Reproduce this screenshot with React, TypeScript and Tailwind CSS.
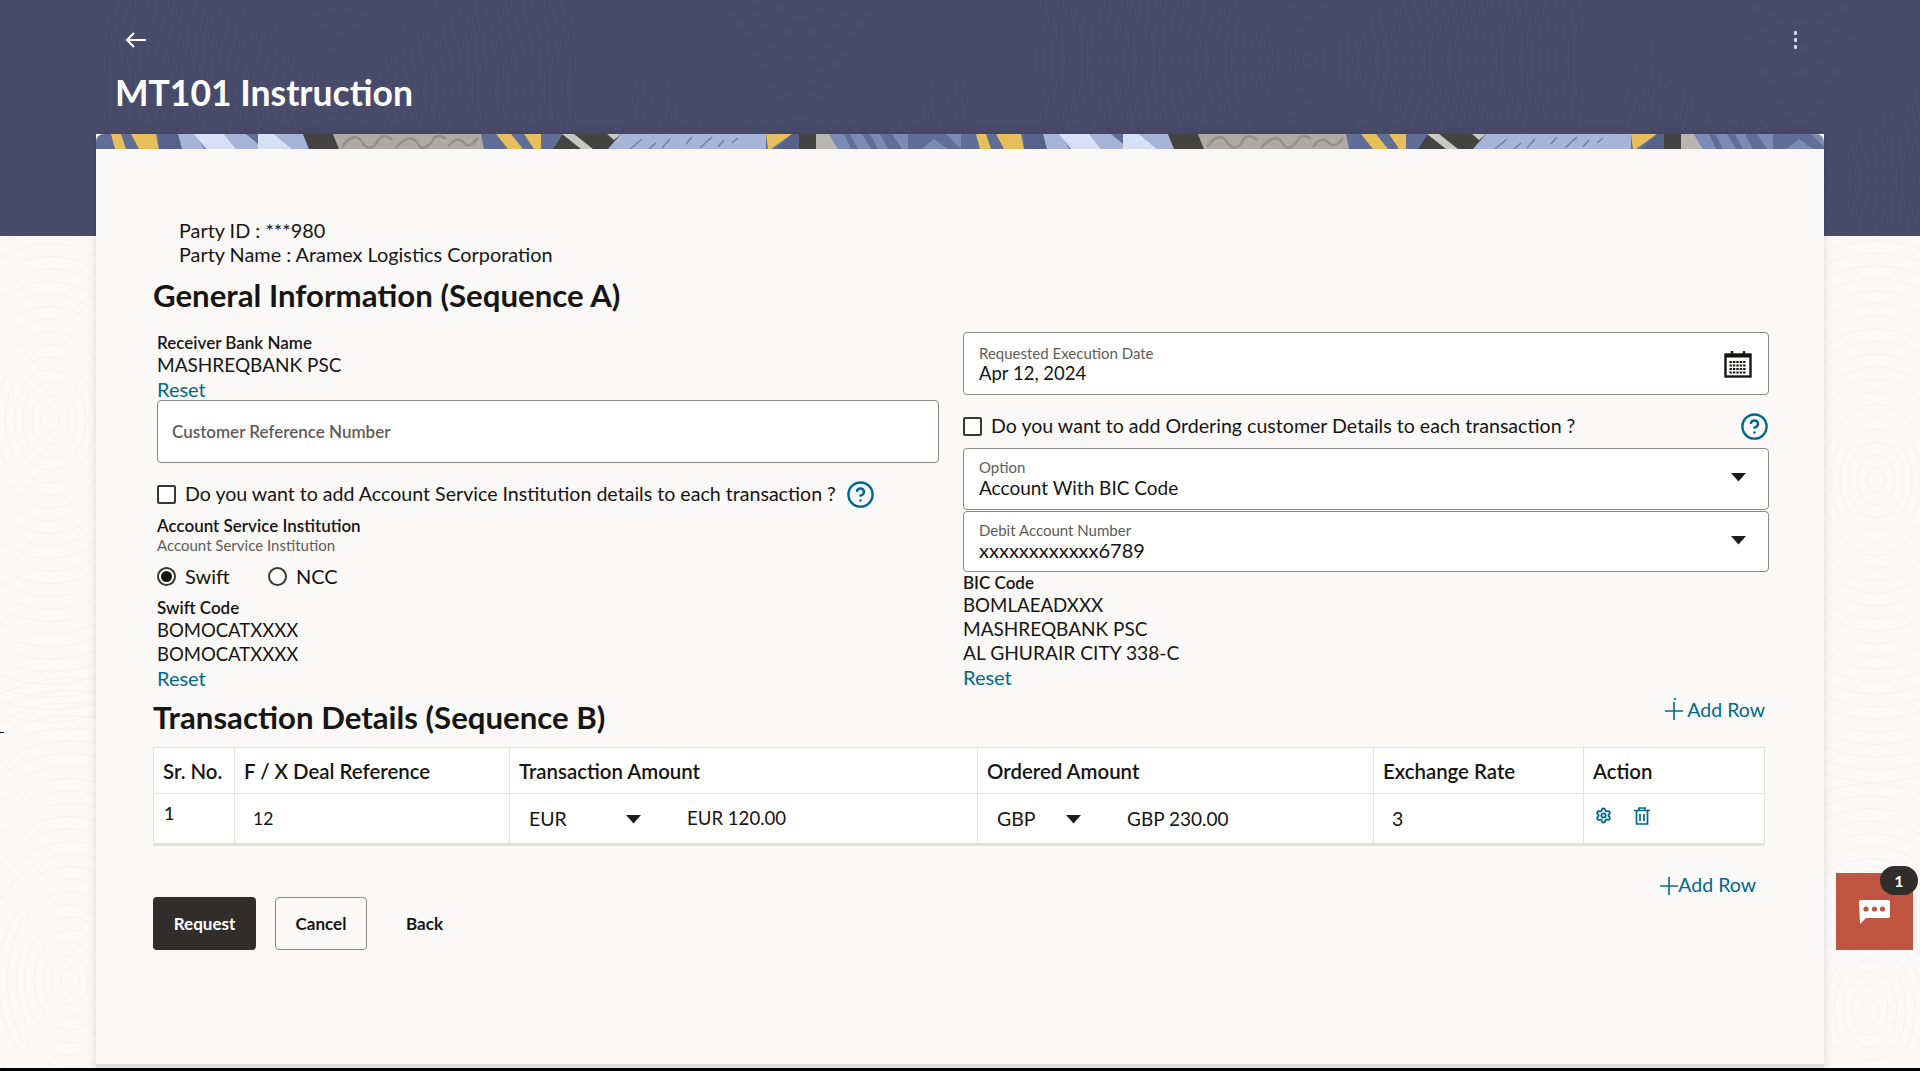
import { Settings, CircleHelp } from "lucide-react";

const Tile = () => (
  <svg className="block h-[15px] w-full" aria-hidden="true">
    <defs>
      <pattern id="tile" x="-0" y="0" width="865" height="15" patternUnits="userSpaceOnUse">
        <rect width="865" height="15" fill="#5f6d97" />
        <path d="M63 0H82L86 15H63Z" fill="#56628c" />
        <path d="M15 0H25L30 15H19ZM35 0H60L63 15H43Z" fill="#e6bf5c" />
        <path d="M82 0H100L108 15H86ZM128 0H150L162 4V15H140ZM178 0H207L213 15H196Z" fill="#a5b4d7" />
        <path d="M98 0H128L140 15H110ZM162 0H178L196 15H162Z" fill="#d7e1f6" />
        <path d="M150 0H162V10Z" fill="#5f6d97" />
        <path d="M207 0H237L243 15H213Z" fill="#454341" />
        <path d="M237 0H385L388 15H243Z" fill="#afaba4" />
        <path d="M246 13C254 1 262 1 266 8S278 16 282 6C286 0 292 2 296 6M300 14C310 2 318 2 322 10S334 12 338 4C342 0 346 2 350 5M352 13C358 4 364 4 368 9S378 10 382 4" fill="none" stroke="#94918b" strokeWidth="2.6" />
        <path d="M400 0H415L427 15H412ZM428 0H445V15H438Z" fill="#e6bf5c" />
        <path d="M467 0H525L512 15H457Z" fill="#454341" />
        <path d="M466 0H478L497 15H485ZM511 0H525L518 6Z" fill="#c9c7c2" />
        <path d="M525 0H670V15H512Z" fill="#a5b4d7" />
        <path d="M534 15L546 5M553 15L560 9M566 14L574 5M590 10L596 3M604 14L616 3M622 13L628 6M636 9L642 4" stroke="#75809f" strokeWidth="1.5" />
        <path d="M670 0H696L675 15H672Z" fill="#e6bf5c" />
        <path d="M696 0H703V15H680Z" fill="#56628c" />
        <path d="M703 0H720V15H703Z" fill="#454341" />
        <path d="M720 0H733L742 15H720Z" fill="#b9b6b0" />
        <path d="M733 0H880V15H742Z" fill="#7c8bb3" />
        <path d="M748 0H754L762 15H755ZM766 0H774L782 15H775ZM784 0H796L806 15H792ZM812 0H850L865 15H852L838 5L826 15H812Z" fill="#5f6d97" />
      </pattern>
    </defs>
    <rect width="100%" height="15" fill="url(#tile)" />
  </svg>
);

const Rings = ({ cx, cy, n, gap, stroke, ry = 1.4 }: { cx: number; cy: number; n: number; gap: number; stroke: string; ry?: number }) => (
  <g fill="none" stroke={stroke} strokeWidth="1">
    {Array.from({ length: n }).map((_, i) => (
      <ellipse key={i} cx={cx} cy={cy} rx={(i + 1) * gap} ry={(i + 1) * gap * ry} />
    ))}
  </g>
);

const Caret = () => (
  <svg width="15" height="10" viewBox="0 0 15 10" aria-hidden="true">
    <path d="M0 1H15L7.5 9.5Z" fill="#1e1c1a" />
  </svg>
);

const Check = () => <span className="block h-[19px] w-[19px] shrink-0 rounded-[2px] border-2 border-[#3a3835] bg-white" />;

const Help = () => <CircleHelp size={29} strokeWidth={2} className="shrink-0 text-[#00688c]" />;

const Field = ({ label, value, h, icon, size }: { label: string; value: string; h: string; icon: React.ReactNode; size: string }) => (
  <div className={`${h} flex items-center justify-between rounded-[4px] border border-[#8b8986] bg-white pl-[15px] pr-[16px]`}>
    <div className="flex flex-col">
      <span className="text-[15px] leading-[18px] text-[#5f5c58]">{label}</span>
      <span className={`${size} leading-[23px] text-[#161513]`}>{value}</span>
    </div>
    {icon}
  </div>
);

const Label = ({ children }: { children: React.ReactNode }) => (
  <div className="h-[20px] text-[17px] font-semibold leading-[20px] text-[#161513]">{children}</div>
);
const Value = ({ children, size }: { children: React.ReactNode; size: string }) => (
  <div className={`${size} h-[24px] leading-[24px] text-[#161513]`}>{children}</div>
);
const Reset = () => <div className="h-[24px] text-[20px] leading-[24px] text-[#00688c]">Reset</div>;

const Plus = ({ dot }: { dot?: boolean }) => (
  <svg width="18" height="24" viewBox="0 0 18 24" aria-hidden="true" stroke="#00688c" strokeWidth="1.6">
    <path d="M9 4V22M0 13H18" />
    {dot && <path d="M10 0V2" />}
  </svg>
);

const Radio = ({ on }: { on?: boolean }) => (
  <span className="flex h-[19px] w-[19px] items-center justify-center rounded-full border-2 border-[#3a3835] bg-white">
    {on && <span className="block h-[11px] w-[11px] rounded-full bg-[#161513]" />}
  </span>
);

const Th = ({ children }: { children: React.ReactNode }) => (
  <th className="border border-[#e4e2de] pl-[9px] pt-[1px] text-left align-middle text-[20.4px] font-semibold text-[#161513]">{children}</th>
);

export default function App() {
  return (
    <div className="relative flex h-[1071px] w-[1920px] flex-col overflow-hidden bg-[#faf9f7] [font-family:Lato,'Liberation_Sans',sans-serif]">
      <svg className="absolute inset-0 h-full w-full" aria-hidden="true">
        <Rings cx={70} cy={980} n={24} gap={9} stroke="#f3f2ef" />
        <Rings cx={1876} cy={480} n={24} gap={9} stroke="#f3f2ef" />
        <Rings cx={1870} cy={1010} n={18} gap={9} stroke="#f3f2ef" />
        <Rings cx={50} cy={420} n={24} gap={9} stroke="#f3f2ef" />
      </svg>

      <header className="relative h-[236px] shrink-0 overflow-hidden bg-[#484c6a]">
        <svg className="absolute inset-0 h-full w-full" aria-hidden="true">
          <Rings cx={340} cy={90} n={26} gap={9} stroke="#454967" />
          <Rings cx={1310} cy={60} n={30} gap={9} stroke="#454967" />
          <Rings cx={1800} cy={180} n={20} gap={9} stroke="#454967" />
          <Rings cx={800} cy={200} n={20} gap={9} stroke="#454967" />
        </svg>
        <div className="relative flex items-center justify-between pl-[125px] pr-[122px] pt-[29px]">
          <svg width="22" height="22" viewBox="0 0 22 22" fill="none" stroke="#fff" strokeWidth="2" aria-hidden="true">
            <path d="M21 11H2M9 4L2 11L9 18" />
          </svg>
          <svg className="-mt-[1px]" width="5" height="18" viewBox="0 0 5 18" fill="#d5d8e8" aria-hidden="true">
            <rect x="1" y="0" width="3" height="4" rx="1" />
            <rect x="1" y="7" width="3" height="4" rx="1" />
            <rect x="1" y="14" width="3" height="4" rx="1" />
          </svg>
        </div>
        <h1 className="relative mt-[20px] pl-[115px] text-[35.5px] font-bold leading-[44px] text-white">MT101 Instruction</h1>
      </header>

      <main className="relative mx-[96px] -mt-[102px] h-[934px] shrink-0 border-b-4 border-[#dfddd9] bg-[#faf9f7] shadow-[0_0_8px_rgba(0,0,0,0.12)]">
        <div className="overflow-hidden rounded-t-[8px]">
          <Tile />
        </div>

        <div className="pt-[69px]">
          <div className="pl-[83px] text-[19.85px] leading-[24px] text-[#161513]">
            <div>Party ID : ***980</div>
            <div>Party Name : Aramex Logistics Corporation</div>
          </div>
        </div>

        <div className="pl-[57px] pr-[59px]">
          <h2 className="mt-[11px] h-[37px] text-[31.2px] font-bold leading-[36px] text-[#161513]">General Information (Sequence A)</h2>

          <div className="mt-[18px] flex items-start pl-[4px]">
            <div className="w-[782px] shrink-0 pt-[1px]">
              <Label>Receiver Bank Name</Label>
              <Value size="text-[19px]">MASHREQBANK PSC</Value>
              <Reset />
              <div className="-mt-[1px] flex h-[63px] items-center rounded-[4px] border border-[#8b8986] bg-white pl-[14px] text-[17px] font-semibold text-[#5f5c58]">
                Customer Reference Number
              </div>
              <div className="mt-[19px] flex h-[24px] items-center text-[19.6px] text-[#161513]">
                <Check />
                <span className="ml-[9px]">Do you want to add Account Service Institution details to each transaction ?</span>
                <span className="ml-[10px] flex"><Help /></span>
              </div>
              <div className="mt-[10px]">
                <Label>Account Service Institution</Label>
              </div>
              <div className="mt-[1px] h-[16px] text-[15px] leading-[16px] text-[#5f5c58]">Account Service Institution</div>
              <div className="mt-[11px] flex h-[24px] items-center text-[20px] text-[#161513]">
                <Radio on />
                <span className="ml-[9px] w-[83px]">Swift</span>
                <Radio />
                <span className="ml-[9px]">NCC</span>
              </div>
              <div className="mt-[10px]">
                <Label>Swift Code</Label>
              </div>
              <Value size="text-[18.5px]">BOMOCATXXXX</Value>
              <Value size="text-[18.5px]">BOMOCATXXXX</Value>
              <Reset />
            </div>

            <div className="ml-[24px] w-[806px] shrink-0">
              <Field
                label="Requested Execution Date"
                value="Apr 12, 2024"
                h="h-[63px] pt-[1px]"
                size="text-[18.5px]"
                icon={
                  <svg width="28" height="28" viewBox="0 0 28 28" aria-hidden="true">
                    <rect x="1.5" y="4.5" width="25" height="22" fill="none" stroke="#161513" strokeWidth="2.4" />
                    <rect x="1.5" y="4.5" width="25" height="3" fill="#161513" />
                    <path d="M8 1V7M20 1V7" stroke="#161513" strokeWidth="2.4" />
                    <path d="M5.5 12H22.5M5.5 15.5H22.5M5.5 19H22.5M5.5 22.5H22.5" stroke="#161513" strokeWidth="2" strokeDasharray="2.4 1" />
                  </svg>
                }
              />
              <div className="mt-[19px] flex h-[24px] items-center text-[19.6px] text-[#161513]">
                <Check />
                <span className="ml-[9px] flex-1">Do you want to add Ordering customer Details to each transaction ?</span>
                <Help />
              </div>
              <div className="mt-[10px]">
                <Field label="Option" value="Account With BIC Code" h="h-[62px] pb-[2px]" size="text-[19px]" icon={<span className="-mt-[3px] mr-[6px] flex"><Caret /></span>} />
              </div>
              <div className="mt-[1px]">
                <Field label="Debit Account Number" value="xxxxxxxxxxxx6789" h="h-[61px]" size="text-[20px]" icon={<span className="-mt-[3px] mr-[6px] flex"><Caret /></span>} />
              </div>
              <div className="mt-[1px]">
                <Label>BIC Code</Label>
              </div>
              <Value size="text-[18.7px]">BOMLAEADXXX</Value>
              <Value size="text-[19px]">MASHREQBANK PSC</Value>
              <Value size="text-[19.2px]">AL GHURAIR CITY 338-C</Value>
              <Reset />
            </div>
          </div>

          <div className="mt-[9px] flex h-[36px] items-start justify-between">
            <h2 className="text-[31.2px] font-bold leading-[36px] text-[#161513]">Transaction Details (Sequence B)</h2>
            <div className="-mt-[1px] flex items-center gap-[4px] text-[19.5px] leading-[24px] text-[#00688c]">
              <Plus dot />
              <span>Add Row</span>
            </div>
          </div>

          <table className="mt-[12px] w-[1611px] table-fixed border-collapse bg-white">
            <colgroup>
              <col className="w-[81px]" />
              <col className="w-[275px]" />
              <col className="w-[468px]" />
              <col className="w-[396px]" />
              <col className="w-[210px]" />
              <col className="w-[181px]" />
            </colgroup>
            <thead>
              <tr className="h-[46px]">
                <Th>Sr. No.</Th>
                <Th>F / X Deal Reference</Th>
                <Th>Transaction Amount</Th>
                <Th>Ordered Amount</Th>
                <Th>Exchange Rate</Th>
                <Th>Action</Th>
              </tr>
            </thead>
            <tbody className="text-[19.5px] text-[#161513]">
              <tr className="h-[51px] border-b-[3px] border-[#e4e2de]">
                <td className="border-x border-[#e4e2de] pb-[10px] pl-[10px] text-[18px] font-medium">1</td>
                <td className="border-x border-[#e4e2de] pl-[18px] pt-[2px] text-[17.5px]">12</td>
                <td className="border-x border-[#e4e2de] pl-[19px]">
                  <div className="flex items-center">
                    <span className="w-[97px]">EUR</span>
                    <Caret />
                    <span className="ml-[46px] mt-[1px] text-[18.6px]">EUR 120.00</span>
                  </div>
                </td>
                <td className="border-x border-[#e4e2de] pl-[19px]">
                  <div className="flex items-center">
                    <span className="w-[69px]">GBP</span>
                    <Caret />
                    <span className="ml-[46px] mt-[1px] text-[19px]">GBP 230.00</span>
                  </div>
                </td>
                <td className="border-x border-[#e4e2de] pl-[18px]">3</td>
                <td className="border-x border-[#e4e2de] pb-[6px] pl-[11px]">
                  <div className="flex items-center gap-[22px]">
                    <Settings size={17} strokeWidth={2.6} className="text-[#00688c]" />
                    <svg width="16" height="18" viewBox="0 0 16 18" fill="none" stroke="#00688c" strokeWidth="1.7" aria-hidden="true">
                      <path d="M0 3.5H16M5 3.5V1H11V3.5M2.5 3.5V17H13.5V3.5M6 7V14M10 7V14" />
                    </svg>
                  </div>
                </td>
              </tr>
            </tbody>
          </table>

          <div className="mt-[27px] flex h-[24px] items-center justify-end pr-[9px] text-[19.5px] leading-[24px] text-[#00688c]">
            <Plus />
            <span>Add Row</span>
          </div>

          <div className="flex items-center">
            <div className="flex h-[53px] w-[103px] items-center justify-center rounded-[4px] bg-[#312d2a] text-[17px] font-bold text-white">Request</div>
            <div className="ml-[19px] flex h-[53px] w-[92px] items-center justify-center rounded-[4px] border border-[#8b8986] text-[17px] font-bold text-[#161513]">Cancel</div>
            <div className="ml-[39px] text-[17px] font-bold text-[#161513]">Back</div>
          </div>
        </div>
      </main>

      <div className="relative mt-auto h-[3px] shrink-0 bg-black" />

      <div className="absolute left-0 top-[732px] h-px w-[4px] bg-black" />

      <div className="absolute left-[1836px] top-[873px] flex h-[77px] w-[77px] items-center justify-center bg-[#bf5540]">
        <svg width="31" height="24" viewBox="0 0 31 24" aria-hidden="true">
          <path d="M2 0H29A2 2 0 0 1 31 2V16A2 2 0 0 1 29 18H7L1 24L0 2A2 2 0 0 1 2 0Z" fill="#fff" />
          <circle cx="7" cy="9" r="2.6" fill="#bf5540" />
          <circle cx="15.5" cy="9" r="2.6" fill="#bf5540" />
          <circle cx="23.5" cy="9" r="2.6" fill="#bf5540" />
        </svg>
        <span className="absolute left-[44px] -top-[7px] flex h-[29px] w-[38px] items-center justify-center rounded-full bg-[#312d2a] text-[16px] font-bold text-white">1</span>
      </div>
    </div>
  );
}
